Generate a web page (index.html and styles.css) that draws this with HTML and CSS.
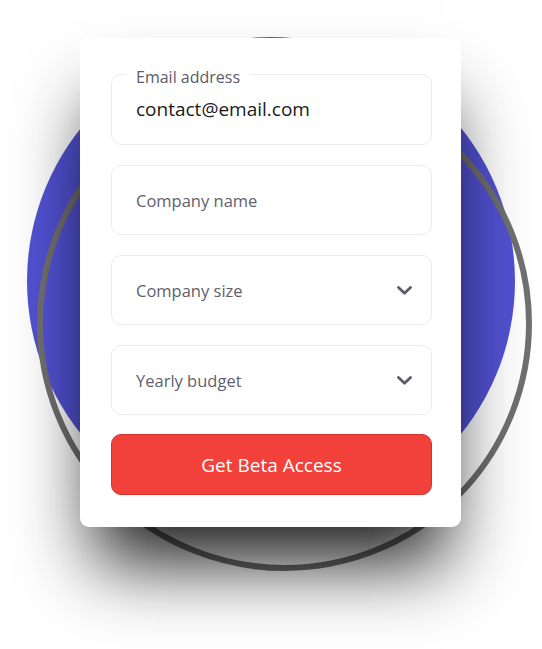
FILE: index.html
```html
<!DOCTYPE html>
<html lang="en">
<head>
<meta charset="utf-8">
<title>Get Beta Access</title>
<link rel="stylesheet" href="styles.css">
</head>
<body>
<div class="stage">
  <div class="blob"></div>
  <div class="ring"></div>
  <form class="card">
    <fieldset class="field field-filled">
      <legend class="field-label">Email address</legend>
      <div class="field-value">contact@email.com</div>
    </fieldset>
    <div class="field">
      <span class="placeholder">Company name</span>
    </div>
    <div class="field">
      <span class="placeholder">Company size</span>
      <svg class="chevron" width="15" height="9" viewBox="0 0 15 9"><path d="M1.5 1.5 L7.5 7.2 L13.5 1.5" fill="none" stroke="#5c5c68" stroke-width="2.8" stroke-linecap="round" stroke-linejoin="round"/></svg>
    </div>
    <div class="field">
      <span class="placeholder">Yearly budget</span>
      <svg class="chevron" width="15" height="9" viewBox="0 0 15 9"><path d="M1.5 1.5 L7.5 7.2 L13.5 1.5" fill="none" stroke="#5c5c68" stroke-width="2.8" stroke-linecap="round" stroke-linejoin="round"/></svg>
    </div>
    <button type="button" class="cta">Get Beta Access</button>
  </form>
</div>
</body>
</html>
```
FILE: styles.css
```css
* { box-sizing: border-box; }
html, body { margin: 0; padding: 0; background: #ffffff; }
body { width: 542px; height: 649px; overflow: hidden; font-family: "Open Sans", "Noto Sans", sans-serif; }

.stage {
  position: relative;
  width: 542px;
  height: 649px;
  padding: 38px 81px 0 80px;
}

.blob {
  position: absolute;
  left: 27px;
  top: 37px;
  width: 488px;
  height: 488px;
  border-radius: 50%;
  background: #5252d4;
}

.ring {
  position: absolute;
  left: 37px;
  top: 76px;
  width: 495px;
  height: 495px;
  border-radius: 50%;
  border: 6px solid #707070;
}

.card {
  position: relative;
  width: 381px;
  background: #ffffff;
  border-radius: 9px;
  padding: 23px 29px 32px 31px;
  display: flex;
  flex-direction: column;
  gap: 20px;
  box-shadow: 0 50px 70px -15px rgba(0, 0, 0, 0.9);
}

.field {
  margin: 0;
  height: 70px;
  border: 1px solid #ebeaf5;
  border-radius: 10px;
  padding: 0 19px 0 24px;
  display: flex;
  align-items: center;
  justify-content: space-between;
}

.field-filled {
  display: block;
  height: auto;
  min-width: 0;
  padding: 0 24px;
}

.field-label {
  padding: 6px 10px 0;
  margin-left: -10px;
  font-size: 16px;
  line-height: 20px;
  color: #5b5b68;
}

.field-value {
  padding: 8px 0 21px;
  font-size: 19px;
  line-height: 28px;
  color: #1a1a1a;
}

.placeholder {
  font-size: 16.5px;
  color: #5f5f6c;
}

.chevron { display: block; }

.cta {
  margin-top: -1px;
  height: 61px;
  border: 1px solid #d6332e;
  border-radius: 10px;
  background: #f2403a;
  color: #ffffff;
  font-family: inherit;
  font-size: 19px;
  cursor: pointer;
}
```
